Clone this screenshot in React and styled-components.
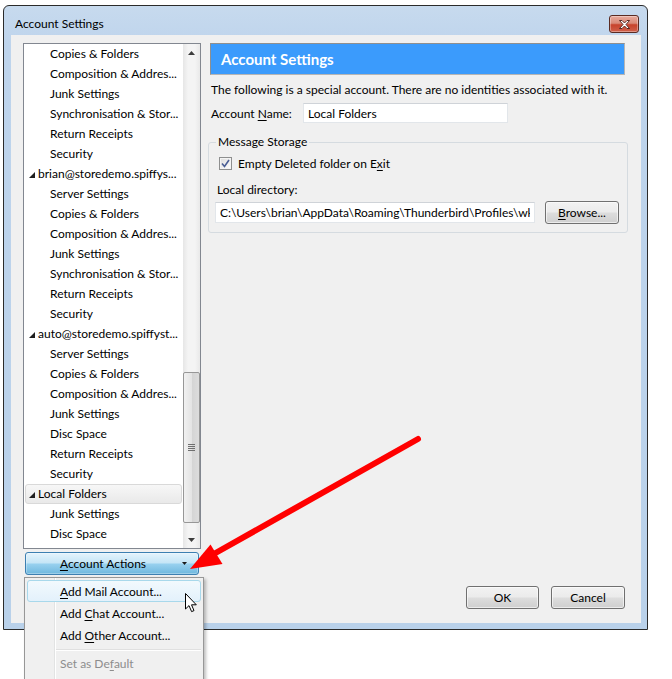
import React from 'react';
import styled, { createGlobalStyle, css } from 'styled-components';

const FONT = `Lato, "Liberation Sans", sans-serif`;

const GlobalStyle = createGlobalStyle`
  html, body {
    margin: 0;
    padding: 0;
    background: #ffffff;
  }
  body {
    font-family: ${FONT};
    font-size: 12px;
    color: #000;
  }
`;

const treeItems = [
  { label: 'Copies & Folders' },
  { label: 'Composition & Addres...' },
  { label: 'Junk Settings' },
  { label: 'Synchronisation & Stor...' },
  { label: 'Return Receipts' },
  { label: 'Security' },
  { label: 'brian@storedemo.spiffys...', parent: true },
  { label: 'Server Settings' },
  { label: 'Copies & Folders' },
  { label: 'Composition & Addres...' },
  { label: 'Junk Settings' },
  { label: 'Synchronisation & Stor...' },
  { label: 'Return Receipts' },
  { label: 'Security' },
  { label: 'auto@storedemo.spiffyst...', parent: true },
  { label: 'Server Settings' },
  { label: 'Copies & Folders' },
  { label: 'Composition & Addres...' },
  { label: 'Junk Settings' },
  { label: 'Disc Space' },
  { label: 'Return Receipts' },
  { label: 'Security' },
  { label: 'Local Folders', parent: true, selected: true },
  { label: 'Junk Settings' },
  { label: 'Disc Space' },
];

const menuItems = [
  { before: '', key: 'A', after: 'dd Mail Account...', hover: true },
  { before: 'Add ', key: 'C', after: 'hat Account...' },
  { before: 'Add ', key: 'O', after: 'ther Account...' },
  { separator: true },
  { before: 'Set as De', key: 'f', after: 'ault', disabled: true },
  { before: '', key: '', after: '', disabled: true },
];

export default function App() {
  return (
    <>
      <GlobalStyle />
      <Desktop>
        <Window>
          <TitleBar>
            <TitleText>Account Settings</TitleText>
            <CloseButton aria-label="Close">
              <svg width="13" height="11" viewBox="0 0 13 11">
                <path
                  d="M1.5 1.5 L4 1.5 L6.5 4 L9 1.5 L11.5 1.5 L8 5.5 L11.5 9.5 L9 9.5 L6.5 7 L4 9.5 L1.5 9.5 L5 5.5 Z"
                  fill="#fff"
                  stroke="#4b1d16"
                  strokeWidth="0.9"
                  strokeLinejoin="round"
                />
              </svg>
            </CloseButton>
          </TitleBar>

          <Client>
            <LeftColumn>
              <Tree>
                <TreeList>
                  {treeItems.map((item, i) => (
                    <TreeRow key={i} $parent={item.parent} $selected={item.selected}>
                      {item.parent && (
                        <Twisty width="6" height="6" viewBox="0 0 6 6">
                          <polygon points="6,0 6,6 0,6" fill="#1e1e1e" />
                        </Twisty>
                      )}
                      <span>{item.label}</span>
                    </TreeRow>
                  ))}
                </TreeList>
                <ScrollBar>
                  <ScrollArrow>
                    <svg width="7" height="4" viewBox="0 0 7 4">
                      <polygon points="3.5,0 7,4 0,4" fill="#3d3d3d" />
                    </svg>
                  </ScrollArrow>
                  <ScrollTrack>
                    <Thumb>
                      <svg width="7" height="8" viewBox="0 0 7 8">
                        <rect x="0" y="0" width="7" height="1" fill="#6f6f6f" />
                        <rect x="0" y="2" width="7" height="1" fill="#6f6f6f" />
                        <rect x="0" y="4" width="7" height="1" fill="#6f6f6f" />
                        <rect x="0" y="6" width="7" height="1" fill="#6f6f6f" />
                      </svg>
                    </Thumb>
                  </ScrollTrack>
                  <ScrollArrow>
                    <svg width="7" height="4" viewBox="0 0 7 4">
                      <polygon points="0,0 7,0 3.5,4" fill="#3d3d3d" />
                    </svg>
                  </ScrollArrow>
                </ScrollBar>
              </Tree>
              <ActionsButton>
                <ActionsLabel>
                  <Key>A</Key>ccount Actions
                </ActionsLabel>
                <DropArrow width="5" height="3" viewBox="0 0 5 3">
                  <polygon points="0,0 5,0 2.5,3" fill="#1a1a1a" />
                </DropArrow>
              </ActionsButton>
            </LeftColumn>

            <RightColumn>
              <Header>Account Settings</Header>
              <Description>
                The following is a special account. There are no identities associated with it.
              </Description>
              <FieldRow>
                <FieldLabel>
                  Account <Key>N</Key>ame:
                </FieldLabel>
                <TextBox $width={205} defaultValue="Local Folders" />
              </FieldRow>

              <GroupBox>
                <Caption>Message Storage</Caption>
                <CheckRow>
                  <CheckBox>
                    <svg width="9" height="9" viewBox="0 0 9 9">
                      <path d="M1 4.5 L3.5 7.5 L8 1" fill="none" stroke="#4a5e95" strokeWidth="1.6" />
                    </svg>
                  </CheckBox>
                  <span>
                    Empty Deleted folder on E<Key>x</Key>it
                  </span>
                </CheckRow>
                <DirLabel>Local directory:</DirLabel>
                <DirRow>
                  <TextBox
                    $width={320}
                    $height={21}
                    defaultValue="C:\Users\brian\AppData\Roaming\Thunderbird\Profiles\wk"
                  />
                  <PushButton $width={74}>
                    <Key>B</Key>rowse...
                  </PushButton>
                </DirRow>
              </GroupBox>

              <DialogButtons>
                <PushButton $width={73}>OK</PushButton>
                <PushButton $width={74}>Cancel</PushButton>
              </DialogButtons>
            </RightColumn>
          </Client>
        </Window>

        <Menu>
          {menuItems.map((item, i) =>
            item.separator ? (
              <MenuSeparator key={i} />
            ) : (
              <MenuItem key={i} $hover={item.hover} $disabled={item.disabled}>
                <span>
                  {item.before}
                  {item.key && <Key>{item.key}</Key>}
                  {item.after}
                </span>
              </MenuItem>
            )
          )}
        </Menu>

        <Cursor width="13" height="20" viewBox="0 0 13 20">
          <path
            d="M0.5 0.5 L0.5 16 L4 12.6 L6.6 18.6 L9 17.6 L6.5 11.8 L11.3 11.8 Z"
            fill="#fff"
            stroke="#000"
            strokeWidth="1"
            strokeLinejoin="miter"
          />
        </Cursor>

        <Annotation width="672" height="679" viewBox="0 0 672 679">
          <line x1="418" y1="439" x2="212" y2="555" stroke="#ff0000" strokeWidth="6" strokeLinecap="round" />
          <polygon points="190,569 210.5,544.5 222.5,564" fill="#ff0000" />
        </Annotation>
      </Desktop>
    </>
  );
}

/* ---------- page / window ---------- */

const Desktop = styled.div`
  position: relative;
  width: 672px;
  height: 679px;
  overflow: hidden;
  padding: 5px 0 0 3px;
  box-sizing: border-box;
`;

const Window = styled.div`
  width: 645px;
  height: 625px;
  box-sizing: border-box;
  border: 1px solid #2b2b2b;
  border-radius: 6px 6px 0 0;
  padding: 0 6px 6px 7px;
  background: linear-gradient(180deg, #c7daee 0px, #bed4ec 40px, #b9d1ea 100%);
  display: flex;
  flex-direction: column;
`;

const TitleBar = styled.div`
  height: 29px;
  display: flex;
  justify-content: space-between;
  align-items: flex-start;
`;

const TitleText = styled.div`
  margin: 10px 0 0 4px;
  line-height: 16px;
  font-size: 12px;
  color: #000;
`;

const CloseButton = styled.button`
  width: 30px;
  height: 18px;
  margin: 9px 2px 0 0;
  padding: 0;
  display: flex;
  align-items: center;
  justify-content: center;
  border: 1px solid #5a2b22;
  border-radius: 3px;
  background: linear-gradient(180deg, #e9aa9c 0%, #d98a78 45%, #c7432c 55%, #d0604a 100%);
  box-shadow: inset 0 0 0 1px rgba(255, 255, 255, 0.35);
`;

const Client = styled.div`
  width: 630px;
  height: 588px;
  box-sizing: border-box;
  background: #f0f0f0;
  padding: 8px 13px 14px 12px;
  display: flex;
  gap: 7px;
`;

/* ---------- left column ---------- */

const LeftColumn = styled.div`
  width: 178px;
  display: flex;
  flex-direction: column;
`;

const Tree = styled.div`
  height: 506px;
  box-sizing: border-box;
  border: 1px solid #828790;
  background: #fff;
  display: flex;
`;

const TreeList = styled.div`
  flex: 1;
  overflow: hidden;
`;

const TreeRow = styled.div`
  height: 20px;
  box-sizing: border-box;
  display: flex;
  align-items: center;
  white-space: nowrap;
  padding: 0 0 1px ${({ $parent }) => ($parent ? '3px' : '24px')};
  border: 1px solid transparent;
  margin: 0 1px;
  ${({ $selected }) =>
    $selected &&
    css`
      border-color: #d9d9d9;
      border-radius: 3px;
      background: linear-gradient(180deg, #f7f7f7, #e9e9e9);
    `}
`;

const Twisty = styled.svg`
  flex: none;
  margin: 2px 3px 0 0;
`;

const ScrollBar = styled.div`
  width: 17px;
  flex: none;
  display: flex;
  flex-direction: column;
  background: linear-gradient(90deg, #e6e6e6, #f4f4f4 30%, #f4f4f4 70%, #e9e9e9);
`;

const ScrollArrow = styled.div`
  height: 17px;
  display: flex;
  align-items: center;
  justify-content: center;
`;

const ScrollTrack = styled.div`
  flex: 1;
  padding-top: 311px;
`;

const Thumb = styled.div`
  height: 151px;
  box-sizing: border-box;
  border: 1px solid #979797;
  border-radius: 2px;
  background: linear-gradient(90deg, #f1f1f1 0%, #e4e4e4 50%, #d4d4d4 51%, #dcdcdc 100%);
  display: flex;
  align-items: center;
  justify-content: center;
  padding-top: 1px;
`;

const ActionsButton = styled.button`
  margin: 3px 2px 0;
  height: 23px;
  padding: 0;
  display: flex;
  align-items: center;
  border: 1px solid #3c7fb1;
  border-radius: 3px;
  font-family: ${FONT};
  font-size: 12px;
  color: #000;
  background: linear-gradient(180deg, #e5f4fc 0%, #c4e5f6 48%, #98d1ef 52%, #6fb8de 100%);
  box-shadow: inset 0 0 0 1px rgba(255, 255, 255, 0.3);
`;

const ActionsLabel = styled.span`
  flex: 1;
  text-align: center;
  padding-left: 2px;
`;

const DropArrow = styled.svg`
  flex: none;
  margin: 0 11px 0 4px;
`;

const Key = styled.span`
  text-decoration: underline;
  text-underline-offset: 2px;
`;

/* ---------- right column ---------- */

const RightColumn = styled.div`
  width: 420px;
  display: flex;
  flex-direction: column;
`;

const Header = styled.div`
  height: 32px;
  margin: 0 3px 0 2px;
  box-sizing: border-box;
  border: 1px solid #8f8f8f;
  border-right-color: #b5b5b5;
  border-bottom-color: #b5b5b5;
  background: #3b9bfc;
  color: #fff;
  font-weight: 700;
  font-size: 15px;
  display: flex;
  align-items: center;
  padding-left: 10px;
`;

const Description = styled.div`
  margin: 7px 0 0 3px;
  line-height: 16px;
  white-space: nowrap;
`;

const FieldRow = styled.div`
  margin-top: 5px;
  display: flex;
  align-items: center;
`;

const FieldLabel = styled.label`
  width: 95px;
  padding-left: 3px;
  box-sizing: border-box;
`;

const TextBox = styled.input`
  width: ${({ $width }) => $width}px;
  height: ${({ $height }) => $height || 20}px;
  box-sizing: border-box;
  border: 1px solid #e2e6ea;
  border-top-color: #cfd3d8;
  background: #fff;
  padding: 0 4px;
  font-family: ${FONT};
  font-size: 12px;
  color: #000;
  outline: none;
`;

const GroupBox = styled.fieldset`
  margin: 11px 0 0;
  padding: 0 8px 8px 6px;
  border: 1px solid #d5dbe0;
  border-radius: 3px;
  min-width: 0;
`;

const Caption = styled.legend`
  margin-left: 1px;
  padding: 0 2px;
  line-height: 16px;
`;

const CheckRow = styled.div`
  margin: 5px 0 0 4px;
  height: 16px;
  display: flex;
  align-items: center;
  gap: 6px;
`;

const CheckBox = styled.span`
  width: 13px;
  height: 13px;
  box-sizing: border-box;
  border: 1px solid #8e8f8f;
  background: linear-gradient(135deg, #dcdcdc, #ffffff);
  box-shadow: inset 0 0 0 1px #f4f4f4;
  display: flex;
  align-items: center;
  justify-content: center;
`;

const DirLabel = styled.div`
  margin: 11px 0 0 2px;
  line-height: 16px;
`;

const DirRow = styled.div`
  margin-top: 3px;
  display: flex;
  align-items: center;
  gap: 10px;
`;

const PushButton = styled.button`
  width: ${({ $width }) => $width}px;
  height: 23px;
  padding: 0;
  border: 1px solid #707070;
  border-radius: 3px;
  background: linear-gradient(180deg, #f2f2f2 0%, #ebebeb 48%, #dddddd 52%, #cfcfcf 100%);
  box-shadow: inset 0 0 0 1px rgba(255, 255, 255, 0.6);
  font-family: ${FONT};
  font-size: 12px;
  color: #000;
`;

const DialogButtons = styled.div`
  margin-top: auto;
  padding-right: 3px;
  display: flex;
  justify-content: flex-end;
  gap: 12px;
`;

/* ---------- overlays ---------- */

const Menu = styled.div`
  position: absolute;
  left: 24px;
  top: 577px;
  width: 180px;
  height: 112px;
  box-sizing: border-box;
  padding: 2px 2px;
  border: 1px solid #979797;
  background: linear-gradient(90deg, #f0f0f0 29px, #e2e3e3 29px, #e2e3e3 30px, #ffffff 30px, #ffffff 31px, #f0f0f0 31px);
  box-shadow: 2px 2px 3px rgba(0, 0, 0, 0.25);
`;

const MenuItem = styled.div`
  height: 22px;
  box-sizing: border-box;
  display: flex;
  align-items: center;
  padding-left: 32px;
  border: 1px solid transparent;
  border-radius: 3px;
  white-space: nowrap;
  color: ${({ $disabled }) => ($disabled ? '#8d8d8d' : '#000')};
  ${({ $hover }) =>
    $hover &&
    css`
      border-color: #a8d8eb;
      background: linear-gradient(180deg, #f2f9fd, #e3f1fb);
    `}
`;

const MenuSeparator = styled.div`
  height: 6px;
  margin-left: 29px;
  display: flex;
  align-items: center;
  &::before {
    content: '';
    flex: 1;
    height: 1px;
    background: #e0e0e0;
    box-shadow: 0 1px 0 #ffffff;
  }
`;

const Cursor = styled.svg`
  position: absolute;
  left: 185px;
  top: 593px;
`;

const Annotation = styled.svg`
  position: absolute;
  left: 0;
  top: 0;
  pointer-events: none;
`;
